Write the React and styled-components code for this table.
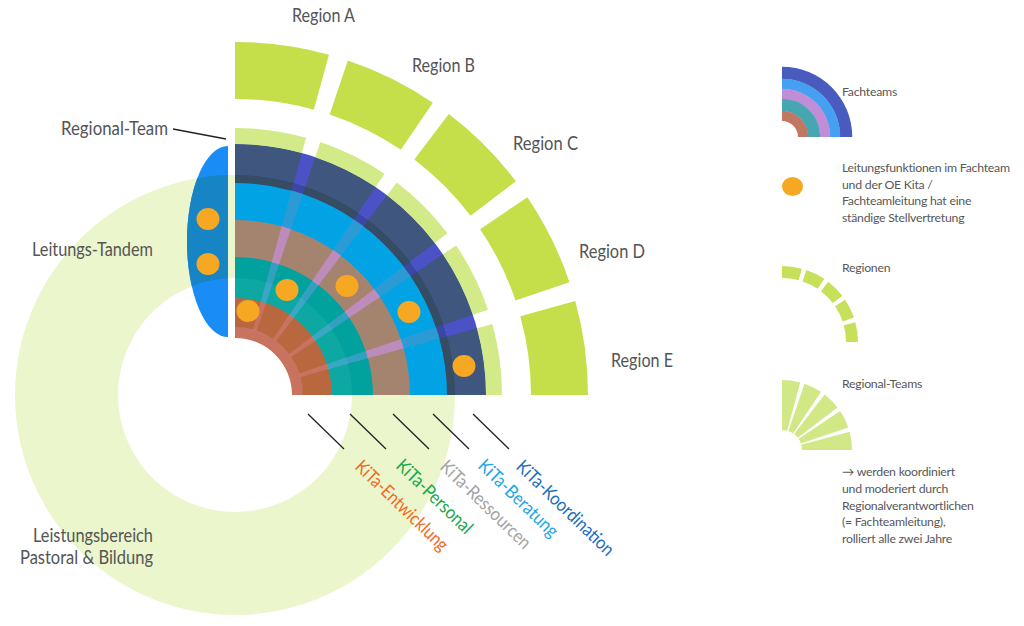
import React from "react";
import styled, { createGlobalStyle } from "styled-components";

const GlobalStyle = createGlobalStyle`
  body {
    margin: 0;
    background: #ffffff;
    font-family: Lato, "Open Sans", sans-serif;
  }
`;

// centre of the quarter fan, angles run clockwise from 12 o'clock
const CX = 235;
const CY = 395;

const pt = (cx, cy, r, a) => {
  const rad = (a * Math.PI) / 180;
  return [cx + r * Math.sin(rad), cy - r * Math.cos(rad)];
};

const sector = (cx, cy, r0, r1, a0, a1) => {
  const [x1, y1] = pt(cx, cy, r1, a0);
  const [x2, y2] = pt(cx, cy, r1, a1);
  const [x3, y3] = pt(cx, cy, r0, a1);
  const [x4, y4] = pt(cx, cy, r0, a0);
  const big = a1 - a0 > 180 ? 1 : 0;
  return `M${x1} ${y1} A${r1} ${r1} 0 ${big} 1 ${x2} ${y2} L${x3} ${y3} A${r0} ${r0} 0 ${big} 0 ${x4} ${y4} Z`;
};

const splitQuarter = (gap) => {
  const w = (90 - 4 * gap) / 5;
  return [0, 1, 2, 3, 4].map((i) => [i * (w + gap), i * (w + gap) + w]);
};

const segs = splitQuarter(3.2);

// raw = Fachteam colour (shows in the gaps), tint = under a Regional-Team
const bands = [
  { r0: 57, r1: 68.4, raw: "#c8735f", tint: null },
  { r0: 68, r1: 97.4, raw: "#c8735f", tint: "#b8673f" },
  { r0: 97, r1: 117.4, raw: "#3aa7c4", tint: "#0ea8a2" },
  { r0: 117, r1: 138.4, raw: "#33a0c0", tint: "#01a19e" },
  { r0: 138, r1: 175.4, raw: "#bd8cbb", tint: "#a4836f" },
  { r0: 175, r1: 212.4, raw: "#2b9bd6", tint: "#02a3e4" },
  { r0: 212, r1: 220.4, raw: "#3a47a4", tint: "#364b64" },
  { r0: 220, r1: 251, raw: "#4b52c6", tint: "#3f567e" },
  { r0: 251, r1: 267, raw: null, tint: "#d2ea88" },
];

const dots = [
  [208, 219],
  [208, 264],
  [287, 290],
  [248, 311],
  [347, 286],
  [409, 312],
  [464, 366],
];

const regions = [
  { name: "Region A", x: 292, y: 22, len: 63 },
  { name: "Region B", x: 412, y: 72, len: 63 },
  { name: "Region C", x: 513, y: 150, len: 65 },
  { name: "Region D", x: 579, y: 258, len: 66 },
  { name: "Region E", x: 611, y: 367, len: 62 },
];

const kita = [
  { name: "KiTa-Entwicklung", color: "#f26a22", x: 354, y: 468, len: 121, line: 308 },
  { name: "KiTa-Personal", color: "#17a84f", x: 395, y: 467, len: 98, line: 350 },
  { name: "KiTa-Ressourcen", color: "#a3a3a3", x: 439, y: 468, len: 118, line: 393 },
  { name: "KiTa-Beratung", color: "#1ea7e6", x: 477, y: 467, len: 103, line: 433 },
  { name: "KiTa-Koordination", color: "#1c6dbd", x: 515, y: 468, len: 128, line: 473 },
];

const TANDEM = "M228 146 A41 95.5 0 0 0 228 337 Z";

const Page = styled.div`
  display: flex;
  width: 1024px;
  height: 626px;
  overflow: hidden;
`;

const Diagram = styled.svg`
  flex: none;
  display: block;
  width: 740px;
  height: 626px;
`;

const Label = styled.text`
  font-family: Lato, "Open Sans", sans-serif;
  font-size: 18.5px;
  fill: #555555;
`;

const KitaLabel = styled.text`
  font-family: Lato, "Open Sans", sans-serif;
  font-size: 18.5px;
  fill: ${(p) => p.$color};
`;

const Pointer = styled.line`
  stroke: #222222;
  stroke-width: 1.3;
`;

const Legend = styled.div`
  display: flex;
  flex-direction: column;
  margin-left: 42px;
  padding-top: 67px;
  width: 200px;
`;

const LegendRow = styled.div`
  display: grid;
  grid-template-columns: 60px 1fr;
  align-items: start;
  margin-top: ${(p) => p.$gap || 0}px;
`;

const IconCell = styled.div`
  min-width: 0;
  padding-top: ${(p) => p.$offset || 0}px;
  svg {
    display: block;
    overflow: visible;
  }
`;

const LegendText = styled.p`
  margin: 0;
  padding-top: ${(p) => p.$offset || 0}px;
  font-size: 12.3px;
  line-height: 16.6px;
  letter-spacing: -0.25px;
  color: #585858;
  white-space: nowrap;
`;

const Note = styled(LegendText)`
  grid-column: 2;
`;

const Dot = styled.span`
  display: block;
  width: 21px;
  height: 19px;
  border-radius: 50%;
  background: #f7a823;
`;

const FachteamsIcon = () => {
  const rings = [
    [58, 70, "#4a5bbf"],
    [48, 58, "#45a0f2"],
    [38, 48, "#c08ed6"],
    [26, 38, "#46a6b1"],
    [16, 26, "#c17863"],
  ];
  return (
    <svg width="70" height="70" viewBox="0 0 70 70">
      {rings.map(([r0, r1, c]) => (
        <path key={c} d={sector(0, 70, r0, r1 + 0.3, 0, 90)} fill={c} />
      ))}
    </svg>
  );
};

const RegionenIcon = () => (
  <svg width="76" height="76" viewBox="0 0 76 76">
    {splitQuarter(3.6).map(([a0, a1]) => (
      <path key={a0} d={sector(0, 76, 64, 76, a0, a1)} fill="#c6e05a" />
    ))}
  </svg>
);

const RegionalTeamsIcon = () => (
  <svg width="70" height="70" viewBox="0 0 70 70">
    {splitQuarter(3.6).map(([a0, a1]) => (
      <path key={a0} d={sector(0, 70, 20, 70, a0, a1)} fill="#d0e986" />
    ))}
  </svg>
);

const App = () => {
  return (
    <>
      <GlobalStyle />
      <Page>
        <Diagram viewBox="0 0 740 626">
          <defs>
            <clipPath id="tandemClip">
              <path d={TANDEM} />
            </clipPath>
          </defs>

          {/* Leistungsbereich ring */}
          <circle cx={CX} cy={CY} r={168.5} fill="none" stroke="#ecf6cc" strokeWidth={103} />

          {/* Leitungs-Tandem */}
          <path d={TANDEM} fill="#1a8cf6" />
          <circle
            cx={CX}
            cy={CY}
            r={168.5}
            fill="none"
            stroke="#1784c6"
            strokeWidth={103}
            clipPath="url(#tandemClip)"
          />

          {/* Fachteams, raw colour underneath */}
          {bands
            .filter((b) => b.raw)
            .map((b) => (
              <path key={`raw${b.r0}`} d={sector(CX, CY, b.r0, b.r1, 0, 90)} fill={b.raw} />
            ))}

          {/* Regional-Teams laid over the Fachteams */}
          {bands
            .filter((b) => b.tint)
            .map((b) =>
              segs.map(([a0, a1]) => (
                <path
                  key={`t${b.r0}-${a0}`}
                  d={sector(CX, CY, b.r0, b.r1, a0, a1)}
                  fill={b.tint}
                />
              ))
            )}

          {/* Regionen */}
          {segs.map(([a0, a1]) => (
            <path key={`reg${a0}`} d={sector(CX, CY, 296, 353, a0, a1)} fill="#c5df4a" />
          ))}

          {dots.map(([x, y]) => (
            <ellipse key={`${x}-${y}`} cx={x} cy={y} rx={11.5} ry={11} fill="#f7a823" />
          ))}

          {regions.map((r) => (
            <Label key={r.name} x={r.x} y={r.y} textLength={r.len} lengthAdjust="spacingAndGlyphs">
              {r.name}
            </Label>
          ))}

          <Pointer x1={173} y1={129} x2={226} y2={139} />
          <Label x={61} y={135} textLength={107} lengthAdjust="spacingAndGlyphs">
            Regional-Team
          </Label>
          <Label x={32} y={256} textLength={121} lengthAdjust="spacingAndGlyphs">
            Leitungs-Tandem
          </Label>
          <Label x={33} y={542} textLength={120} lengthAdjust="spacingAndGlyphs">
            Leistungsbereich
          </Label>
          <Label x={20} y={564} textLength={133} lengthAdjust="spacingAndGlyphs">
            Pastoral &amp; Bildung
          </Label>

          {kita.map((k) => (
            <g key={k.name}>
              <Pointer x1={k.line} y1={414} x2={k.line + 36} y2={449} />
              <KitaLabel
                $color={k.color}
                transform={`translate(${k.x} ${k.y}) rotate(44)`}
                textLength={k.len}
                lengthAdjust="spacingAndGlyphs"
              >
                {k.name}
              </KitaLabel>
            </g>
          ))}
        </Diagram>

        <Legend>
          <LegendRow>
            <IconCell>
              <FachteamsIcon />
            </IconCell>
            <LegendText $offset={17}>Fachteams</LegendText>
          </LegendRow>

          <LegendRow $gap={23}>
            <IconCell $offset={17}>
              <Dot />
            </IconCell>
            <LegendText>
              Leitungsfunktionen im Fachteam
              <br />
              und der OE Kita /
              <br />
              Fachteamleitung hat eine
              <br />
              ständige Stellvertretung
            </LegendText>
          </LegendRow>

          <LegendRow $gap={34}>
            <IconCell $offset={6}>
              <RegionenIcon />
            </IconCell>
            <LegendText>Regionen</LegendText>
          </LegendRow>

          <LegendRow $gap={34}>
            <IconCell $offset={4}>
              <RegionalTeamsIcon />
            </IconCell>
            <LegendText>Regional-Teams</LegendText>
          </LegendRow>

          <LegendRow $gap={14}>
            <Note>
              → werden koordiniert
              <br />
              und moderiert durch
              <br />
              Regionalverantwortlichen
              <br />
              (= Fachteamleitung),
              <br />
              rolliert alle zwei Jahre
            </Note>
          </LegendRow>
        </Legend>
      </Page>
    </>
  );
};

export default App;
